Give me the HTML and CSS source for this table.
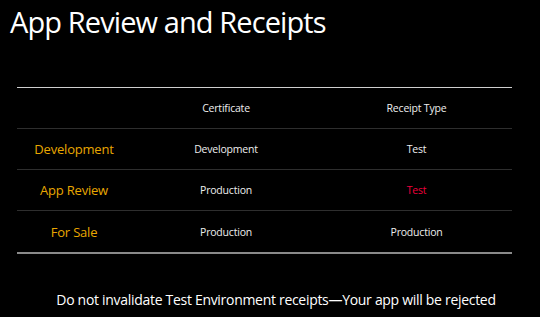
FILE: index.html
```html
<!DOCTYPE html>
<html>
<head>
<meta charset="utf-8">
<link rel="stylesheet" href="styles.css">
</head>
<body>
<div class="slide">
  <h1 class="title">App Review and Receipts</h1>
  <div class="table">
    <div class="row head">
      <div class="c1"></div>
      <div class="c2">Certificate</div>
      <div class="c3">Receipt Type</div>
    </div>
    <div class="row">
      <div class="c1 label">Development</div>
      <div class="c2">Development</div>
      <div class="c3">Test</div>
    </div>
    <div class="row">
      <div class="c1 label">App Review</div>
      <div class="c2">Production</div>
      <div class="c3 red">Test</div>
    </div>
    <div class="row last">
      <div class="c1 label">For Sale</div>
      <div class="c2">Production</div>
      <div class="c3">Production</div>
    </div>
  </div>
  <p class="note">Do not invalidate Test Environment receipts—Your app will be rejected</p>
</div>
</body>
</html>
```
FILE: styles.css
```css
* { box-sizing: border-box; }
html, body { margin: 0; padding: 0; background: #000; }
.slide {
  width: 540px;
  height: 317px;
  background: #000;
  color: #fff;
  font-family: "Open Sans", "Noto Sans", sans-serif;
  display: flex;
  flex-direction: column;
}
.title {
  margin: 0;
  padding: 3px 0 0 10px;
  font-weight: 400;
  font-size: 29px;
  line-height: 38px;
  letter-spacing: -0.9px;
  color: #fff;
}
.table {
  margin: 46px 28px 0 17px;
  border-top: 1px solid #cfcfcf;
  border-bottom: 2px solid #8a8a8a;
}
.row {
  display: grid;
  grid-template-columns: 114px 190px 1fr;
  height: 41px;
  align-items: center;
  border-bottom: 1px solid #2e2e2e;
  font-size: 10.5px;
  letter-spacing: -0.2px;
  color: #eee;
  text-align: center;
}
.row.last { border-bottom: none; }
.label {
  color: #e9a700;
  font-size: 13px;
  letter-spacing: -0.2px;
}
.red { color: #f0003c; }
.note {
  margin: 36px 0 0 0;
  text-align: center;
  font-size: 14px;
  letter-spacing: -0.3px;
  color: #fff;
  padding-left: 12px;
}
```
